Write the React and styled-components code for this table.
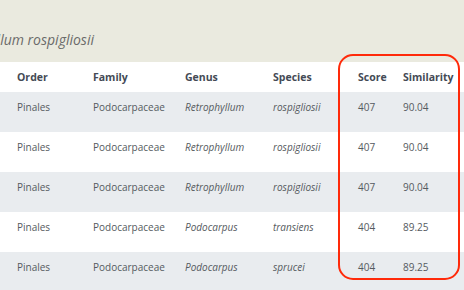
import React from "react";
import styled, { createGlobalStyle } from "styled-components";

const Global = createGlobalStyle`
  html, body { margin: 0; padding: 0; background: #ffffff; }
  body { font-family: "Open Sans", "Noto Sans", sans-serif; overflow: hidden; }
`;

const Page = styled.div`
  position: relative;
  width: 464px;
  height: 290px;
  overflow: hidden;
  background: #ffffff;
`;

const Banner = styled.div`
  height: 62px;
  background: #eaeadf;
  display: flex;
  align-items: flex-end;
  box-sizing: border-box;
  padding-bottom: 12px;
  overflow: hidden;
`;

const Title = styled.div`
  font-style: italic;
  font-size: 14px;
  line-height: 20px;
  color: #6a6a6a;
  white-space: nowrap;
  margin-left: -59px;
`;

const Grid = styled.div`
  display: grid;
  grid-template-columns: 76px 92px 88px 85px 45px 1fr;
  padding-left: 17px;
  box-sizing: border-box;
`;

const HeadRow = styled(Grid)`
  height: 30px;
  align-items: center;
  background: #ffffff;
`;

const Row = styled(Grid)`
  height: 40px;
  align-items: start;
  padding-top: 6px;
  background: ${(p) => (p.$alt ? "#e9ecef" : "#ffffff")};
`;

const Th = styled.div`
  font-size: 10.5px;
  line-height: 16px;
  font-weight: 700;
  color: #444a55;
  white-space: nowrap;
`;

const Td = styled.div`
  font-size: 10px;
  line-height: 18px;
  color: #555a60;
  white-space: nowrap;
  font-style: ${(p) => (p.$italic ? "italic" : "normal")};
`;

const Highlight = styled.div`
  position: absolute;
  left: 338px;
  top: 54px;
  width: 122px;
  height: 226px;
  border: 2.5px solid #ff2a0a;
  border-radius: 15px;
  box-sizing: border-box;
  pointer-events: none;
`;

const rows = [
  ["Pinales", "Podocarpaceae", "Retrophyllum", "rospigliosii", "407", "90.04"],
  ["Pinales", "Podocarpaceae", "Retrophyllum", "rospigliosii", "407", "90.04"],
  ["Pinales", "Podocarpaceae", "Retrophyllum", "rospigliosii", "407", "90.04"],
  ["Pinales", "Podocarpaceae", "Podocarpus", "transiens", "404", "89.25"],
  ["Pinales", "Podocarpaceae", "Podocarpus", "sprucei", "404", "89.25"],
];

export default function App() {
  return (
    <Page>
      <Global />
      <Banner>
        <Title>Retrophyllum rospigliosii</Title>
      </Banner>
      <HeadRow>
        <Th>Order</Th>
        <Th>Family</Th>
        <Th>Genus</Th>
        <Th>Species</Th>
        <Th>Score</Th>
        <Th>Similarity</Th>
      </HeadRow>
      {rows.map((r, i) => (
        <Row key={i} $alt={i % 2 === 0}>
          <Td>{r[0]}</Td>
          <Td>{r[1]}</Td>
          <Td $italic>{r[2]}</Td>
          <Td $italic>{r[3]}</Td>
          <Td>{r[4]}</Td>
          <Td>{r[5]}</Td>
        </Row>
      ))}
      <Highlight />
    </Page>
  );
}
